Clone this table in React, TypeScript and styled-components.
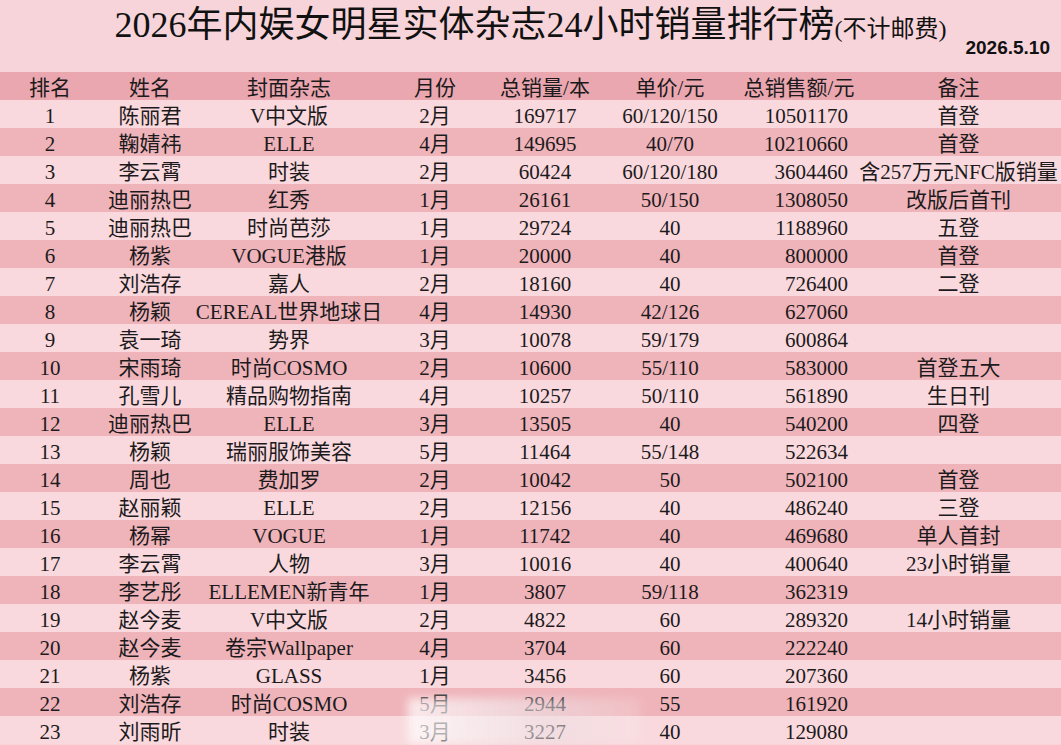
import React from "react";
import styled, { createGlobalStyle } from "styled-components";

const GlobalStyle = createGlobalStyle`
	html, body {
		margin: 0;
		padding: 0;
		background: #f7d4d9;
		overflow: hidden;
	}
`;

const Page = styled.div`
	position: relative;
	width: 1061px;
	height: 745px;
	background: #f7d4d9;
	color: #1c1a1c;
	font-family: "Liberation Serif", "Noto Sans CJK SC", serif;
`;

const Header = styled.div`
	display: grid;
	grid-template-columns: 1fr auto 1fr;
	height: 72px;
`;

const Title = styled.h1`
	grid-column: 2;
	margin: 0;
	padding-top: 7px;
	font-size: 36px;
	line-height: 36px;
	font-weight: 400;
	white-space: nowrap;
	color: #111;
`;

const TitleNote = styled.span`
	font-size: 24px;
`;

const DateStamp = styled.div`
	grid-column: 3;
	justify-self: end;
	padding-top: 37px;
	padding-right: 11px;
	font-family: "Liberation Sans", sans-serif;
	font-weight: 700;
	font-size: 19px;
	line-height: 22px;
	color: #111;
`;

const Row = styled.div<{ $tone: "head" | "light" | "dark" }>`
	display: grid;
	grid-template-columns: 100px 100px 178px 114px 106px 144px 114px 1fr;
	height: 28px;
	font-size: 21px;
	white-space: nowrap;
	background: ${(p) =>
		p.$tone === "head" ? "#eaa7af" : p.$tone === "dark" ? "#efb4ba" : "#f9d9dd"};
`;

const Cell = styled.div<{ $align?: "center" | "right" }>`
	display: flex;
	justify-content: ${(p) => (p.$align === "right" ? "flex-end" : "center")};
	padding-top: 4px;
	padding-right: ${(p) => (p.$align === "right" ? "8px" : "0")};
	line-height: 24px;
	overflow: visible;
`;

const Watermark = styled.div`
	position: absolute;
	left: 408px;
	top: 698px;
	width: 232px;
	height: 46px;
	background: linear-gradient(90deg, rgba(255, 255, 255, 0.7), rgba(236, 224, 228, 0.6) 60%, rgba(255, 255, 255, 0.15));
	filter: blur(5px);
`;

const headers = ["排名", "姓名", "封面杂志", "月份", "总销量/本", "单价/元", "总销售额/元", "备注"];

type Entry = [string, string, string, string, string, string, string];

const rows: Entry[] = [
	["陈丽君", "V中文版", "2月", "169717", "60/120/150", "10501170", "首登"],
	["鞠婧祎", "ELLE", "4月", "149695", "40/70", "10210660", "首登"],
	["李云霄", "时装", "2月", "60424", "60/120/180", "3604460", "含257万元NFC版销量"],
	["迪丽热巴", "红秀", "1月", "26161", "50/150", "1308050", "改版后首刊"],
	["迪丽热巴", "时尚芭莎", "1月", "29724", "40", "1188960", "五登"],
	["杨紫", "VOGUE港版", "1月", "20000", "40", "800000", "首登"],
	["刘浩存", "嘉人", "2月", "18160", "40", "726400", "二登"],
	["杨颖", "CEREAL世界地球日", "4月", "14930", "42/126", "627060", ""],
	["袁一琦", "势界", "3月", "10078", "59/179", "600864", ""],
	["宋雨琦", "时尚COSMO", "2月", "10600", "55/110", "583000", "首登五大"],
	["孔雪儿", "精品购物指南", "4月", "10257", "50/110", "561890", "生日刊"],
	["迪丽热巴", "ELLE", "3月", "13505", "40", "540200", "四登"],
	["杨颖", "瑞丽服饰美容", "5月", "11464", "55/148", "522634", ""],
	["周也", "费加罗", "2月", "10042", "50", "502100", "首登"],
	["赵丽颖", "ELLE", "2月", "12156", "40", "486240", "三登"],
	["杨幂", "VOGUE", "1月", "11742", "40", "469680", "单人首封"],
	["李云霄", "人物", "3月", "10016", "40", "400640", "23小时销量"],
	["李艺彤", "ELLEMEN新青年", "1月", "3807", "59/118", "362319", ""],
	["赵今麦", "V中文版", "2月", "4822", "60", "289320", "14小时销量"],
	["赵今麦", "卷宗Wallpaper", "4月", "3704", "60", "222240", ""],
	["杨紫", "GLASS", "1月", "3456", "60", "207360", ""],
	["刘浩存", "时尚COSMO", "5月", "2944", "55", "161920", ""],
	["刘雨昕", "时装", "3月", "3227", "40", "129080", ""],
];

export default function App() {
	return (
		<Page>
			<GlobalStyle />
			<Header>
				<Title>
					2026年内娱女明星实体杂志24小时销量排行榜<TitleNote>(不计邮费)</TitleNote>
				</Title>
				<DateStamp>2026.5.10</DateStamp>
			</Header>

			<Row $tone="head">
				{headers.map((h) => (
					<Cell key={h}>{h}</Cell>
				))}
			</Row>

			{rows.map((r, i) => (
				<Row key={i} $tone={i % 2 === 0 ? "light" : "dark"}>
					<Cell>{i + 1}</Cell>
					<Cell>{r[0]}</Cell>
					<Cell>{r[1]}</Cell>
					<Cell>{r[2]}</Cell>
					<Cell>{r[3]}</Cell>
					<Cell>{r[4]}</Cell>
					<Cell $align="right">{r[5]}</Cell>
					<Cell>{r[6]}</Cell>
				</Row>
			))}

			<Watermark />
		</Page>
	);
}
